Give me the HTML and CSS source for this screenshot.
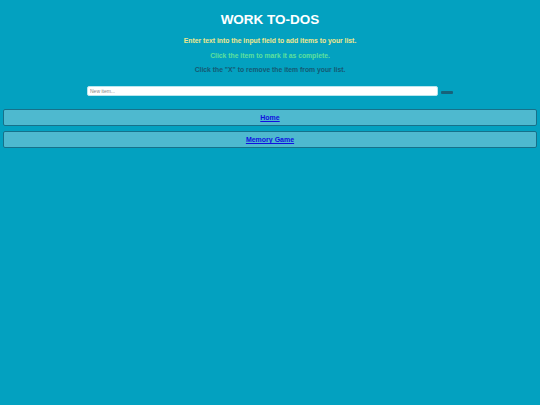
FILE: index.html
```html
<!DOCTYPE html>
<html>
<head>
<meta charset="utf-8">
<link rel="stylesheet" href="styles.css">
</head>
<body>
<header class="intro">
  <h1 class="title">WORK TO-DOS</h1>
  <p class="hint hint-add">Enter text into the input field to add items to your list.</p>
  <p class="hint hint-done">Click the item to mark it as complete.</p>
  <p class="hint hint-remove">Click the "X" to remove the item from your list.</p>
</header>
<form class="entry">
  <input class="entry-input" type="text" placeholder="New item...">
  <button class="entry-btn" type="button"></button>
</form>
<nav class="links">
  <div class="link-box"><a href="#">Home</a></div>
  <div class="link-box"><a href="#">Memory Game</a></div>
</nav>
</body>
</html>
```
FILE: styles.css
```css
html, body {
  margin: 0;
  padding: 0;
  background: #03a1c0;
  font-family: "Liberation Sans", Arial, sans-serif;
  height: 100%;
}
body {
  padding: 0 3px;
}
.intro {
  text-align: center;
  padding-top: 12px;
}
.title {
  margin: 0;
  font-size: 13.5px;
  line-height: 16px;
  color: #ffffff;
  font-weight: bold;
}
.hint {
  margin: 0;
  font-size: 6.8px;
  line-height: 8px;
  font-weight: bold;
}
.hint-add {
  margin-top: 9px;
  color: #f0e88e;
}
.hint-done {
  margin-top: 7px;
  color: #5ee09c;
}
.hint-remove {
  margin-top: 6px;
  color: #155a74;
}
.entry {
  display: flex;
  justify-content: center;
  align-items: flex-end;
  margin: 12px 0 0;
  gap: 3px;
}
.entry-input {
  width: 351px;
  height: 10px;
  box-sizing: border-box;
  border: 1px solid #b8e6ee;
  border-radius: 2px;
  padding: 0 2px;
  font-size: 5px;
  font-family: "Liberation Sans", Arial, sans-serif;
  background: #fff;
  margin: 0;
}
.entry-input::placeholder {
  color: #888;
}
.entry-btn {
  width: 12px;
  height: 3px;
  border: none;
  border-radius: 1px;
  background: #17627a;
  padding: 0;
  margin: 0 0 2px;
}
.links {
  margin-top: 13px;
  display: flex;
  flex-direction: column;
  gap: 5px;
}
.link-box {
  height: 17px;
  box-sizing: border-box;
  background: #4eb9cf;
  border: 1px solid #16718a;
  border-radius: 2px;
  display: flex;
  align-items: center;
  justify-content: center;
}
.link-box a {
  color: #1010e0;
  font-size: 7px;
  font-weight: bold;
  text-decoration: underline;
}
```
